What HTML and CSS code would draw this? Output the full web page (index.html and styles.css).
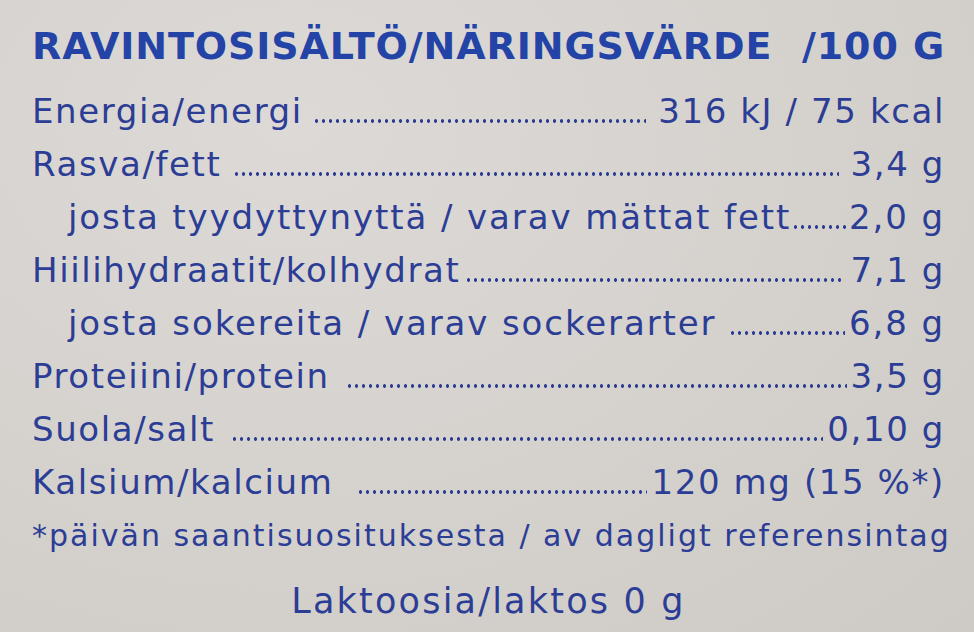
FILE: index.html
```html
<!DOCTYPE html>
<html lang="fi">
<head>
<meta charset="utf-8">
<title>Ravintosisältö</title>
<link rel="stylesheet" href="styles.css">
</head>
<body>
<div class="label">
  <div class="title"><span>RAVINTOSISÄLTÖ/NÄRINGSVÄRDE</span><span>/100 G</span></div>
  <div class="row"><span class="name">Energia/energi</span><span class="dots gl-s gr-l"></span><span class="val">316 kJ / 75 kcal</span></div>
  <div class="row"><span class="name">Rasva/fett</span><span class="dots gl-m gr-l"></span><span class="val">3,4 g</span></div>
  <div class="row sub"><span class="name">josta tyydyttynyttä / varav mättat fett</span><span class="dots gl-0 gr-0"></span><span class="val">2,0 g</span></div>
  <div class="row"><span class="name">Hiilihydraatit/kolhydrat</span><span class="dots gl-xs gr-m"></span><span class="val">7,1 g</span></div>
  <div class="row sub"><span class="name">josta sokereita / varav sockerarter</span><span class="dots gl-m gr-s"></span><span class="val">6,8 g</span></div>
  <div class="row"><span class="name">Proteiini/protein</span><span class="dots gl-l gr-s"></span><span class="val">3,5 g</span></div>
  <div class="row"><span class="name">Suola/salt</span><span class="dots gl-l gr-s"></span><span class="val">0,10 g</span></div>
  <div class="row"><span class="name">Kalsium/kalcium</span><span class="dots gl-xl gr-s"></span><span class="val">120 mg (15 %*)</span></div>
  <div class="note">*päivän saantisuosituksesta / av dagligt referensintag</div>
  <div class="lactose">Laktoosia/laktos 0 g</div>
</div>
</body>
</html>
```
FILE: styles.css
```css
html, body {
  margin: 0;
  padding: 0;
}
body {
  width: 974px;
  height: 632px;
  overflow: hidden;
  background: radial-gradient(ellipse at 30% 20%, #dcd9d6 0%, #d5d2ce 55%, #ceCAC6 100%);
  font-family: "DejaVu Sans", Lato, sans-serif;
  color: #2c3d95;
}
.label {
  padding: 22px 29px 0 32px;
  display: flex;
  flex-direction: column;
}
.title {
  display: flex;
  justify-content: space-between;
  font-weight: 700;
  font-size: 38px;
  line-height: 48px;
  margin-bottom: 15px;
  color: #2443a7;
  letter-spacing: 0.9px;
}
.row {
  display: flex;
  align-items: baseline;
  font-size: 34px;
  line-height: 53px;
  letter-spacing: 1.6px;
}
.row.sub {
  padding-left: 36px;
  letter-spacing: 1.9px;
}
.name, .val {
  white-space: nowrap;
}
.dots {
  flex: 1;
  height: 4px;
  background-image: radial-gradient(circle, #2c3d95 1.5px, transparent 2px);
  background-size: 7px 4px;
  background-repeat: repeat-x;
  background-position: left bottom;
}
.gl-0 { margin-left: 1px; }
.gl-xs { margin-left: 5px; }
.gl-s { margin-left: 10px; }
.gl-m { margin-left: 12px; }
.gl-l { margin-left: 16px; }
.gl-xl { margin-left: 24px; }
.gr-0 { margin-right: 1px; }
.gr-s { margin-right: 4px; }
.gr-m { margin-right: 8px; }
.gr-l { margin-right: 12px; }
.note {
  font-size: 30px;
  line-height: 53px;
  white-space: nowrap;
  letter-spacing: 2px;
}
.lactose {
  font-size: 35px;
  line-height: 78px;
  text-align: center;
  letter-spacing: 2.2px;
}
```
